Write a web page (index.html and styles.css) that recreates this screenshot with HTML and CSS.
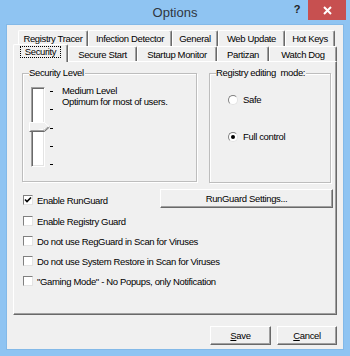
FILE: index.html
```html
<!DOCTYPE html>
<html>
<head>
<meta charset="utf-8">
<link rel="stylesheet" href="styles.css">
</head>
<body>
<div class="window">
  <div class="titlebar">
    <div class="title">Options</div>
    <div class="help">?</div>
    <div class="close">
      <svg width="9" height="9" viewBox="0 0 9 9"><path d="M1 1 L8 8 M8 1 L1 8" stroke="#fff" stroke-width="2" fill="none"/></svg>
    </div>
  </div>
  <div class="client">
    <div class="tabrow row1">
      <div class="tab t-rt">Registry Tracer</div>
      <div class="tab t-id">Infection Detector</div>
      <div class="tab t-ge">General</div>
      <div class="tab t-wu">Web Update</div>
      <div class="tab t-hk">Hot Keys</div>
    </div>
    <div class="tabrow row2">
      <div class="tab sel t-se"><span class="focus">Security</span></div>
      <div class="tab t-ss">Secure Start</div>
      <div class="tab t-sm">Startup Monitor</div>
      <div class="tab t-pa">Partizan</div>
      <div class="tab t-wd">Watch Dog</div>
    </div>
    <div class="panel">
      <div class="groups">
        <div class="group g1">
          <span class="legend">Security Level</span>
          <div class="level">
            <div class="slider">
              <div class="track"></div>
              <svg class="thumb" width="22" height="11" viewBox="0 0 22 11">
                <path d="M0.5 10 L0.5 0.5 L15.5 0.5 L20.5 5" stroke="#fff" fill="#f0f0f0"/>
                <path d="M20.5 5 L15.5 9.5 L0.5 9.5" stroke="#696969" fill="none"/>
                <path d="M1.5 8.5 L15 8.5 L19 5" stroke="#a0a0a0" fill="none"/>
              </svg>
            </div>
            <div class="ticks"><i></i><i></i><i></i><i></i><i></i></div>
            <div class="level-text">
              <div>Medium Level</div>
              <div>Optimum for most of users.</div>
            </div>
          </div>
        </div>
        <div class="group g2">
          <span class="legend">Registry editing&nbsp; mode:</span>
          <div class="radio r1"><span class="rb"></span>Safe</div>
          <div class="radio r2"><span class="rb on"></span>Full control</div>
        </div>
      </div>
      <div class="opts">
        <div class="opt first">
          <span class="cb"><svg width="8" height="8" viewBox="0 0 8 8"><path d="M1 3.5 L3 5.5 L7 1.5" stroke="#000" stroke-width="1.6" fill="none"/></svg></span>
          <span class="lbl">Enable RunGuard</span>
          <button class="btn rg">RunGuard Settings...</button>
        </div>
        <div class="opt"><span class="cb"></span><span class="lbl">Enable Registry Guard</span></div>
        <div class="opt"><span class="cb"></span><span class="lbl">Do not use RegGuard in Scan for Viruses</span></div>
        <div class="opt"><span class="cb"></span><span class="lbl">Do not use System Restore in Scan for Viruses</span></div>
        <div class="opt"><span class="cb"></span><span class="lbl">"Gaming Mode" - No Popups, only Notification</span></div>
      </div>
    </div>
    <div class="actions">
      <button class="btn save"><u>S</u>ave</button>
      <button class="btn cancel"><u>C</u>ancel</button>
    </div>
  </div>
</div>
</body>
</html>
```
FILE: styles.css
```css
html, body {
  margin: 0;
  padding: 0;
}
body {
  font-family: "Liberation Sans", Arial, sans-serif;
  font-size: 9.5px;
  letter-spacing: -0.35px;
  color: #000;
  background: #8fc4f2;
}
.window {
  width: 350px;
  height: 356px;
  background: #8fc4f2;
  display: flex;
  flex-direction: column;
}
.titlebar {
  height: 24px;
  display: flex;
  align-items: flex-start;
}
.title {
  flex: 1;
  margin-left: 58px;
  text-align: center;
  font-size: 13px;
  letter-spacing: 0;
  color: #2f3640;
  line-height: 26px;
}
.help {
  width: 10px;
  padding-right: 6px;
  text-align: center;
  font-weight: bold;
  font-size: 11px;
  letter-spacing: 0;
  color: #222;
  line-height: 18px;
}
.close {
  width: 38px;
  height: 20px;
  margin-right: 4px;
  background: #c75050;
  display: flex;
  align-items: center;
  justify-content: center;
}
.client {
  margin: 0 6px 6px;
  border: 1px solid #83b9e8;
  background: #f0f0f0;
  flex: 1;
  display: flex;
  flex-direction: column;
}
.tabrow {
  display: flex;
}
.row1 {
  margin-top: 5px;
  height: 16px;
  padding-left: 11px;
}
.row2 {
  height: 15px;
  padding-left: 6px;
}
.tab {
  box-sizing: border-box;
  height: 100%;
  border-top: 1px solid #fff;
  border-left: 1px solid #fff;
  border-right: 1px solid #696969;
  box-shadow: inset -1px 0 0 #a0a0a0;
  border-radius: 2px 2px 0 0;
  display: flex;
  align-items: center;
  justify-content: center;
  white-space: nowrap;
  background: #f0f0f0;
}
.t-rt { width: 70px; }
.t-id { width: 84px; }
.t-ge { width: 46px; }
.t-wu { width: 67px; }
.t-hk { width: 50px; }
.t-se { width: 55px; }
.t-ss { width: 69px; }
.t-sm { width: 80px; }
.t-pa { width: 52px; }
.t-wd { width: 68px; }
.tab.sel {
  height: 18px;
  margin-top: -2px;
  margin-bottom: -1px;
  position: relative;
  z-index: 1;
  padding-bottom: 3px;
}
.focus {
  border: 1px dotted #000;
  padding: 0 4px;
  line-height: 10px;
}
.panel {
  margin-left: 6px;
  width: 324px;
  height: 254px;
  box-sizing: border-box;
  border-top: 1px solid #fff;
  border-left: 1px solid #fff;
  border-right: 1px solid #696969;
  border-bottom: 1px solid #696969;
  box-shadow: inset -1px -1px 0 #a0a0a0;
  display: flex;
  flex-direction: column;
}
.groups {
  display: flex;
  align-items: flex-start;
  gap: 12px;
  padding: 11px 0 0 8px;
}
.group {
  box-sizing: border-box;
  border: 1px solid #bdbdbd;
  box-shadow: inset 1px 1px 0 #fff, 1px 1px 0 #fff;
}
.g1 {
  width: 175px;
  height: 109px;
}
.g2 {
  width: 122px;
  height: 110px;
}
.legend {
  display: table;
  margin: -7px 0 0 6px;
  padding: 0 1px 0 0;
  line-height: 12px;
  background: #f0f0f0;
}
.level {
  display: flex;
  align-items: flex-start;
  margin-top: 8px;
  padding-left: 8px;
}
.slider {
  position: relative;
  width: 14px;
  height: 80px;
}
.track {
  box-sizing: border-box;
  width: 14px;
  height: 80px;
  background: #fff;
  border-top: 1px solid #a0a0a0;
  border-left: 1px solid #a0a0a0;
  border-right: 1px solid #fff;
  border-bottom: 1px solid #fff;
  box-shadow: inset 1px 1px 0 #696969, inset -1px -1px 0 #e3e3e3;
}
.thumb {
  position: absolute;
  left: -2px;
  top: 35px;
}
.ticks {
  box-sizing: border-box;
  height: 80px;
  width: 3px;
  margin-left: 5px;
  padding: 4px 0 2px;
  display: flex;
  flex-direction: column;
  justify-content: space-between;
}
.ticks i {
  display: block;
  width: 3px;
  height: 1px;
  background: #000;
}
.level-text {
  margin: -2px 0 0 9px;
  line-height: 11px;
  white-space: nowrap;
}
.radio {
  display: flex;
  align-items: center;
  height: 13px;
  padding-left: 18px;
  gap: 5px;
}
.r1 { margin-top: 14px; }
.r2 { margin-top: 24px; }
.rb {
  box-sizing: border-box;
  width: 10px;
  height: 10px;
  border-radius: 50%;
  background: #fff;
  border: 1px solid;
  border-color: #808080 #e3e3e3 #e3e3e3 #808080;
  display: flex;
  align-items: center;
  justify-content: center;
}
.rb.on::after {
  content: "";
  width: 4px;
  height: 4px;
  border-radius: 50%;
  background: #000;
}
.opts {
  margin-top: 6px;
  padding-left: 9px;
  display: flex;
  flex-direction: column;
}
.opt {
  display: flex;
  align-items: center;
  height: 20px;
  gap: 4px;
  white-space: nowrap;
}
.opt.first {
  height: 19px;
  margin-bottom: 3px;
}
.opt.first .lbl,
.opt.first .cb {
  margin-top: 3px;
}
.cb {
  box-sizing: border-box;
  width: 10px;
  height: 10px;
  background: #fff;
  border: 1px solid;
  border-color: #808080 #e3e3e3 #e3e3e3 #808080;
  display: flex;
  align-items: center;
  justify-content: center;
}
.btn {
  box-sizing: border-box;
  font: inherit;
  letter-spacing: inherit;
  color: #000;
  height: 19px;
  padding: 0;
  background: #f0f0f0;
  border: 1px solid;
  border-color: #fff #696969 #696969 #fff;
  box-shadow: inset -1px -1px 0 #a0a0a0;
  border-radius: 0;
}
.rg {
  width: 173px;
  margin-left: auto;
  margin-right: 3px;
}
.actions {
  display: flex;
  justify-content: flex-end;
  gap: 6px;
  margin-top: 11px;
  padding-right: 6px;
}
.save { width: 61px; }
.cancel { width: 60px; }
```
